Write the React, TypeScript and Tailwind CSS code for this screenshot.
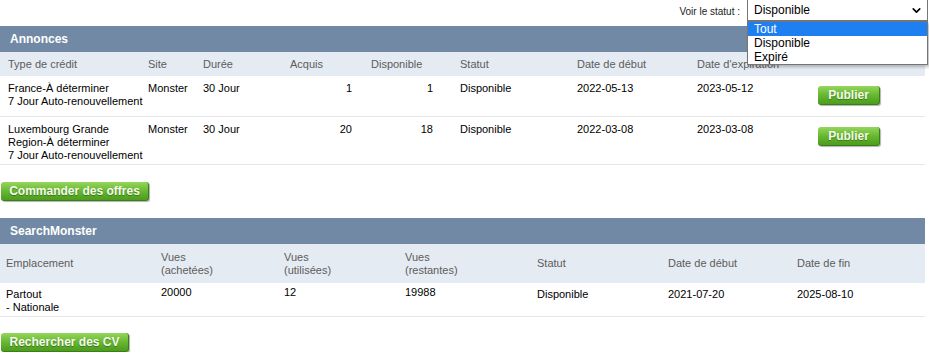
import { ChevronDown } from "lucide-react";

const GreenButton = ({ label, className = "" }: { label: string; className?: string }) => (
  <button
    className={`h-[19px] rounded-[3px] border-b border-r border-[#3c7d18] bg-linear-to-b from-[#95d65c] via-[#67b830] to-[#4c9c1f] text-[12px] font-bold leading-none text-[#f4fbea] [text-shadow:0_1px_1px_rgba(0,0,0,0.35)] shadow-[1px_1px_1px_rgba(0,0,0,0.3)] ${className}`}
  >
    {label}
  </button>
);

const SectionTitle = ({ title }: { title: string }) => (
  <div className="flex h-[26px] items-center bg-[#7189a4] pl-[10px] text-[12px] font-bold text-white">
    {title}
  </div>
);

const annonces = [
  {
    type: ["France-À déterminer", "7 Jour Auto-renouvellement"],
    site: "Monster",
    duree: "30 Jour",
    acquis: "1",
    dispo: "1",
    statut: "Disponible",
    debut: "2022-05-13",
    fin: "2023-05-12",
    h: "h-[41px]",
  },
  {
    type: ["Luxembourg Grande", "Region-À déterminer", "7 Jour Auto-renouvellement"],
    site: "Monster",
    duree: "30 Jour",
    acquis: "20",
    dispo: "18",
    statut: "Disponible",
    debut: "2022-03-08",
    fin: "2023-03-08",
    h: "h-[48px]",
  },
];

const annCols = "grid grid-cols-[140px_55px_87px_81px_89px_117px_120px_121px_1fr] pl-[8px]";
const smCols = "grid grid-cols-[155px_123px_121px_132px_131px_129px_1fr] pl-[6px]";

const StatusFilter = () => (
  <div className="relative flex h-[26px] items-start justify-end pr-[1px]">
    <span className="mt-[5px] mr-[7px] text-[10px] text-[#222]">Voir le statut :</span>
    <div className="flex h-[21px] w-[181px] items-center justify-between border border-t-0 border-[#767676] bg-white pl-[6px] pr-[4px] text-[12px] text-black">
      <span>Disponible</span>
      <ChevronDown className="h-[13px] w-[13px]" strokeWidth={3} />
    </div>
    <div className="absolute top-[21px] right-[1px] z-10 w-[181px] border border-[#767676] bg-white text-[12px] leading-[14px] shadow-[2px_2px_3px_rgba(0,0,0,0.25)]">
      <div className="bg-[#1e7ff0] pl-[6px] text-white">Tout</div>
      <div className="pl-[6px] text-black">Disponible</div>
      <div className="pl-[6px] text-black">Expiré</div>
    </div>
  </div>
);

export default function App() {
  return (
    <div className="w-[929px] bg-white font-['Liberation_Sans',Arial,sans-serif] text-[11px] leading-[13px] text-black">
      <StatusFilter />

      <div className="w-[925px]">
        <SectionTitle title="Annonces" />
        <div className={`${annCols} h-[24px] items-center bg-[#e5ebf2] text-[#5c5c5c]`}>
          <span>Type de crédit</span>
          <span>Site</span>
          <span>Durée</span>
          <span>Acquis</span>
          <span>Disponible</span>
          <span>Statut</span>
          <span>Date de début</span>
          <span>Date d'expiration</span>
          <span />
        </div>
        {annonces.map((a) => (
          <div key={a.debut} className={`${annCols} ${a.h} items-start border-b border-[#e6e6e6]`}>
            <div className="pt-[6px]">
              {a.type.map((t) => (
                <div key={t}>{t}</div>
              ))}
            </div>
            <span className="pt-[6px]">{a.site}</span>
            <span className="pt-[6px]">{a.duree}</span>
            <span className="pt-[6px] pr-[19px] text-right">{a.acquis}</span>
            <span className="pt-[6px] pr-[27px] text-right">{a.dispo}</span>
            <span className="pt-[6px]">{a.statut}</span>
            <span className="pt-[6px]">{a.debut}</span>
            <span className="pt-[6px]">{a.fin}</span>
            <div className="pt-[10px]">
              <GreenButton label="Publier" className="w-[62px]" />
            </div>
          </div>
        ))}
      </div>

      <GreenButton label="Commander des offres" className="mt-[17px] ml-[1px] w-[148px]" />

      <div className="mt-[17px] w-[925px]">
        <SectionTitle title="SearchMonster" />
        <div className={`${smCols} h-[39px] items-center bg-[#e5ebf2] text-[#5c5c5c]`}>
          <span>Emplacement</span>
          <span>
            Vues
            <br />
            (achetées)
          </span>
          <span>
            Vues
            <br />
            (utilisées)
          </span>
          <span>
            Vues
            <br />
            (restantes)
          </span>
          <span>Statut</span>
          <span>Date de début</span>
          <span>Date de fin</span>
        </div>
        <div className={`${smCols} h-[34px] items-start border-b border-[#e6e6e6]`}>
          <div className="pt-[5px]">
            <div>Partout</div>
            <div>- Nationale</div>
          </div>
          <span className="pt-[3px]">20000</span>
          <span className="pt-[3px]">12</span>
          <span className="pt-[3px]">19988</span>
          <span className="pt-[5px]">Disponible</span>
          <span className="pt-[5px]">2021-07-20</span>
          <span className="pt-[5px]">2025-08-10</span>
        </div>
      </div>

      <GreenButton label="Rechercher des CV" className="mt-[16px] ml-[1px] w-[128px]" />
    </div>
  );
}
